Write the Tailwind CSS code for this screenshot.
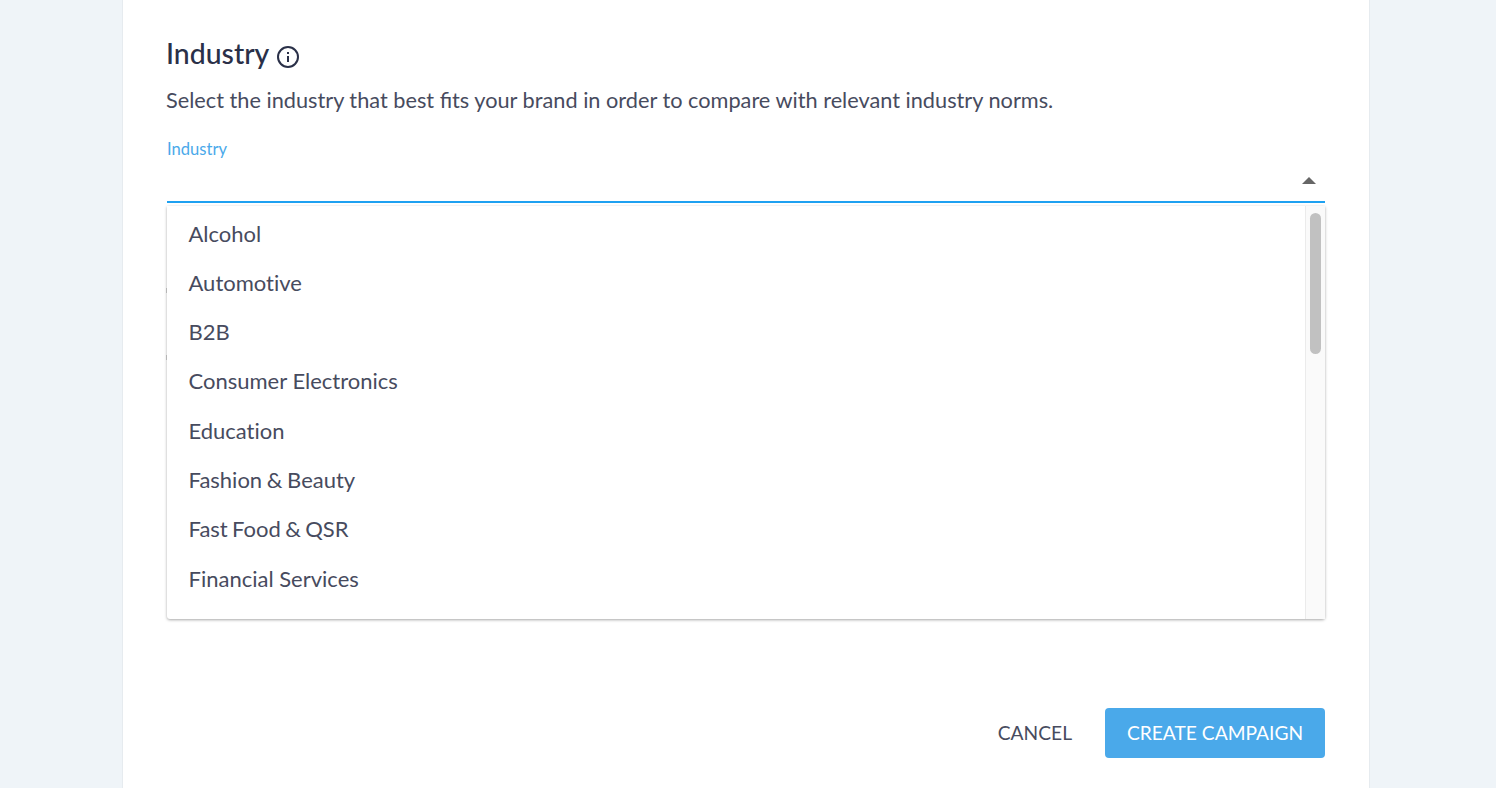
<!DOCTYPE html>
<html lang="en">
<head>
<meta charset="utf-8">
<title>Industry</title>
<script src="https://cdn.jsdelivr.net/npm/@tailwindcss/browser@4"></script>
</head>
<body class="h-[788px] overflow-hidden bg-[#eff4f8] font-['Lato','Noto_Sans',sans-serif]">
<div class="ml-[122px] h-[788px] w-[1248px] border-x border-[#e6ebef] bg-white pl-[43px] pr-[44px] pt-[35px]">

  <!-- Section header -->
  <div class="flex h-[36px] items-center">
    <h2 class="text-[28.4px] leading-[36px] font-medium text-[#2a3048]">Industry</h2>
    <svg class="ml-[7px] mt-[7px] h-[24px] w-[24px] text-[#2a3048]" viewBox="0 0 24 24" fill="none" stroke="currentColor">
      <circle cx="12" cy="12" r="10" stroke-width="2"/>
      <path d="M12 11v6" stroke-width="2"/>
      <path d="M12 7v2" stroke-width="2"/>
    </svg>
  </div>
  <p class="mt-[14px] text-[21.72px] leading-[30px] text-[#474b5e]">Select the industry that best fits your brand in order to compare with relevant industry norms.</p>

  <!-- Select field -->
  <div class="relative ml-[1px] mt-[22px]">
    <label class="block text-[16.6px] leading-[24px] text-[#4aa9ea]">Industry</label>
    <div class="flex h-[42px] items-center justify-end border-b-2 border-[#1ea1f1] pr-[9px]">
      <div class="-mt-[1px] h-0 w-0 border-x-[7px] border-b-[7px] border-x-transparent border-b-[#666666]"></div>
    </div>

    <!-- Underlines of the fields behind the menu -->
    <div class="absolute -left-[1px] top-[151px] h-[5px] w-[1px] bg-[#d0d0d0]"></div>
    <div class="absolute -left-[1px] top-[218px] h-[5px] w-[1px] bg-[#d0d0d0]"></div>

    <!-- Menu -->
    <div class="absolute left-0 right-0 top-[69px] z-10 flex h-[413px] rounded-b-[3px] bg-white shadow-[0_1px_3px_rgba(0,0,0,0.35)]">
      <ul class="flex-1 pt-[2.6px] text-[22px] leading-[49.3px] text-[#474b5e] [font-variant-ligatures:none]">
        <li class="px-[21.5px]">Alcohol</li>
        <li class="px-[21.5px]">Automotive</li>
        <li class="px-[21.5px]">B2B</li>
        <li class="px-[21.5px]">Consumer Electronics</li>
        <li class="px-[21.5px]">Education</li>
        <li class="px-[21.5px] [word-spacing:-1px]">Fashion &amp; Beauty</li>
        <li class="px-[21.5px] [word-spacing:-1.3px]">Fast Food &amp; QSR</li>
        <li class="px-[21.5px]">Financial Services</li>
      </ul>
      <div class="w-[20px] border-l border-[#ebebeb] bg-[#fafafa] px-[4px] pt-[7px]">
        <div class="h-[141px] w-[11px] rounded-full bg-[#c1c1c1]"></div>
      </div>
    </div>
  </div>

  <!-- Actions -->
  <div class="mt-[505px] flex items-center justify-end">
    <button class="mr-[33px] text-[19.2px] text-[#474b5e]">CANCEL</button>
    <button class="h-[50px] w-[220px] rounded-[4px] bg-[#4aa9ea] text-[19.2px] text-white">CREATE CAMPAIGN</button>
  </div>
</div>
</body>
</html>
